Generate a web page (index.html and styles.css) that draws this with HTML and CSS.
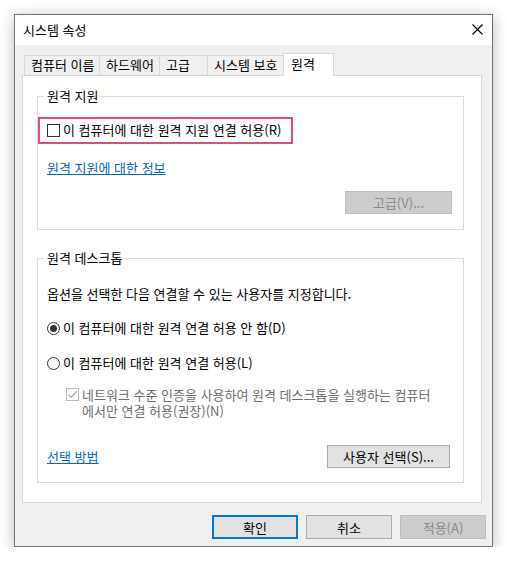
FILE: index.html
```html
<!DOCTYPE html>
<html lang="ko">
<head>
<meta charset="utf-8">
<title>시스템 속성</title>
<link rel="stylesheet" href="styles.css">
</head>
<body>
<div class="window">
  <div class="titlebar">
    <span class="title">시스템 속성</span>
    <svg class="close" width="11" height="11" viewBox="0 0 11 11"><path d="M0.5 0.5 L10.5 10.5 M10.5 0.5 L0.5 10.5" stroke="#000" stroke-width="1.1" fill="none"/></svg>
  </div>
  <div class="content">
    <div class="tabs">
      <div class="tab t1">컴퓨터 이름</div>
      <div class="tab t2">하드웨어</div>
      <div class="tab t3">고급</div>
      <div class="tab t4">시스템 보호</div>
      <div class="tab active">원격</div>
    </div>
    <div class="panel">
      <div class="group g1">
        <span class="legend">원격 지원</span>
        <div class="row check-row">
          <span class="checkbox"></span>
          <span>이 컴퓨터에 대한 원격 지원 연결 허용(R)</span>
        </div>
        <a class="link link1" href="#">원격 지원에 대한 정보</a>
        <div class="btn-row">
          <span class="btn disabled adv">고급(V)...</span>
        </div>
        <div class="highlight"></div>
      </div>
      <div class="group g2">
        <span class="legend">원격 데스크톱</span>
        <div class="desc">옵션을 선택한 다음 연결할 수 있는 사용자를 지정합니다.</div>
        <div class="row radio-row r1">
          <span class="radio checked"></span>
          <span>이 컴퓨터에 대한 원격 연결 허용 안 함(D)</span>
        </div>
        <div class="row radio-row r2">
          <span class="radio"></span>
          <span>이 컴퓨터에 대한 원격 연결 허용(L)</span>
        </div>
        <div class="nla">
          <span class="checkbox dis">
            <svg width="11" height="11" viewBox="0 0 11 11"><path d="M1.5 5.5 L4.3 8.3 L9.8 2.2" stroke="#a8a8a8" stroke-width="1.2" fill="none"/></svg>
          </span>
          <span class="nla-text">네트워크 수준 인증을 사용하여 원격 데스크톱을 실행하는 컴퓨터<br>에서만 연결 허용(권장)(N)</span>
        </div>
        <div class="bottom-row">
          <a class="link" href="#">선택 방법</a>
          <span class="btn users">사용자 선택(S)...</span>
        </div>
      </div>
    </div>
    <div class="footer">
      <span class="btn default">확인</span>
      <span class="btn">취소</span>
      <span class="btn disabled">적용(A)</span>
    </div>
  </div>
</div>
</body>
</html>
```

FILE: styles.css
```css
* { box-sizing: border-box; }
html, body { margin: 0; background: #ffffff; }
body {
  padding: 14px 0 0 14px;
  font-family: "Noto Sans CJK KR", "Noto Sans", sans-serif;
  font-size: 13px;
  color: #000;
}
.window {
  width: 479px;
  height: 533px;
  border: 1px solid #747474;
  box-shadow: 0 3px 14px rgba(0, 0, 0, 0.28);
  background: #f0f0f0;
}
.titlebar {
  height: 30px;
  background: #ffffff;
  display: flex;
  align-items: center;
  justify-content: space-between;
  padding: 0 9px 0 8px;
}
.title { line-height: 16px; }
.close { display: block; margin-top: -1px; }
.content {
  height: 501px;
  padding: 8px 10px 0 7px;
  display: flex;
  flex-direction: column;
}
.tabs {
  height: 22px;
  display: flex;
  align-items: flex-end;
  padding-left: 2px;
  position: relative;
  z-index: 2;
}
.tab {
  height: 20px;
  border: 1px solid #d9d9d9;
  border-bottom: none;
  background: #f0f0f0;
  padding-left: 6px;
  line-height: 18px;
  white-space: nowrap;
  margin-left: -1px;
}
.tab.t1 { width: 76px; margin-left: 0; }
.tab.t2 { width: 61px; }
.tab.t3 { width: 49px; }
.tab.t4 { width: 77px; }
.tab.active {
  width: 51px;
  height: 23px;
  background: #ffffff;
  margin-bottom: -1px;
  padding-left: 7px;
  line-height: 19px;
}
.panel {
  height: 428px;
  background: #ffffff;
  border: 1px solid #d9d9d9;
  padding: 20px 0 0 14px;
  display: flex;
  flex-direction: column;
  gap: 28px;
}
.group {
  width: 427px;
  border: 1px solid #dcdcdc;
  position: relative;
  padding-left: 9px;
  display: flex;
  flex-direction: column;
  align-items: flex-start;
}
.g1 { height: 134px; padding-top: 25px; }
.g2 { height: 225px; padding-top: 27px; padding-right: 13px; }
.legend {
  position: absolute;
  top: -9px;
  left: 6px;
  background: #ffffff;
  padding: 0 3px;
  line-height: 16px;
}
.row {
  display: flex;
  align-items: center;
  gap: 3px;
  line-height: 16px;
  white-space: nowrap;
}
.checkbox {
  width: 13px;
  height: 13px;
  border: 1px solid #333333;
  background: #ffffff;
  display: inline-flex;
  align-items: center;
  justify-content: center;
  flex: none;
}
.checkbox.dis { border-color: #bcbcbc; margin-top: 1px; }
.radio {
  width: 13px;
  height: 13px;
  border: 1px solid #333333;
  border-radius: 50%;
  background: #ffffff;
  display: inline-flex;
  align-items: center;
  justify-content: center;
  flex: none;
}
.radio.checked::after {
  content: "";
  width: 7px;
  height: 7px;
  border-radius: 50%;
  background: #333333;
}
.link {
  color: #0066cc;
  text-decoration: underline;
  line-height: 16px;
}
.link1 { margin-top: 22px; }
.btn-row {
  align-self: stretch;
  display: flex;
  justify-content: flex-end;
  margin-top: 15px;
  padding-right: 11px;
}
.btn {
  display: inline-flex;
  align-items: center;
  justify-content: center;
  height: 23px;
  background: #e1e1e1;
  border: 1px solid #adadad;
  white-space: nowrap;
}
.btn.disabled {
  background: #cccccc;
  border-color: #bfbfbf;
  color: #8a8a8a;
}
.adv { width: 107px; }
.highlight {
  position: absolute;
  left: 0;
  top: 20px;
  width: 255px;
  height: 27px;
  border: 2px solid #e8497c;
  pointer-events: none;
}
.desc { line-height: 16px; white-space: nowrap; }
.r1 { margin-top: 18px; }
.r2 { margin-top: 19px; }
.nla {
  display: flex;
  align-items: flex-start;
  gap: 3px;
  margin-top: 16px;
  padding-left: 19px;
  color: #6d6d6d;
}
.nla-text { line-height: 16px; }
.bottom-row {
  align-self: stretch;
  display: flex;
  justify-content: space-between;
  align-items: center;
  margin-top: 26px;
}
.users { width: 123px; }
.footer {
  display: flex;
  justify-content: flex-end;
  gap: 8px;
  margin-top: 12px;
  margin-right: -4px;
}
.footer .btn { width: 86px; height: 24px; }
.btn.default { border: 2px solid #0078d7; }
```
